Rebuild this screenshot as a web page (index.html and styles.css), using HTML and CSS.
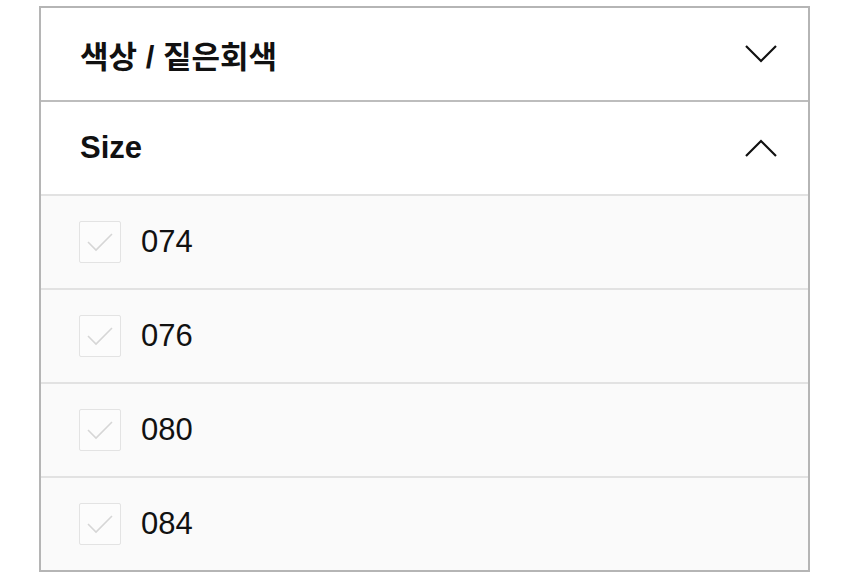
FILE: index.html
```html
<!DOCTYPE html>
<html lang="ko">
<head>
<meta charset="utf-8">
<title>Filter</title>
<link rel="stylesheet" href="styles.css">
</head>
<body>
<div class="panel">
  <div class="head">
    <span class="title">색상 / 짙은회색</span>
    <svg class="chev" width="32" height="18" viewBox="0 0 32 18"><polyline points="1,1 16,16 31,1" fill="none" stroke="#111" stroke-width="2.2"/></svg>
  </div>
  <div class="head">
    <span class="title">Size</span>
    <svg class="chev" width="32" height="18" viewBox="0 0 32 18"><polyline points="1,17 16,2 31,17" fill="none" stroke="#111" stroke-width="2.2"/></svg>
  </div>
  <div class="opt">
    <span class="box"><svg width="42" height="42" viewBox="0 0 42 42"><polyline points="9,21 17,29 33,13" fill="none" stroke="#d6d6d6" stroke-width="1.6"/></svg></span>
    <span class="label">074</span>
  </div>
  <div class="opt">
    <span class="box"><svg width="42" height="42" viewBox="0 0 42 42"><polyline points="9,21 17,29 33,13" fill="none" stroke="#d6d6d6" stroke-width="1.6"/></svg></span>
    <span class="label">076</span>
  </div>
  <div class="opt">
    <span class="box"><svg width="42" height="42" viewBox="0 0 42 42"><polyline points="9,21 17,29 33,13" fill="none" stroke="#d6d6d6" stroke-width="1.6"/></svg></span>
    <span class="label">080</span>
  </div>
  <div class="opt">
    <span class="box"><svg width="42" height="42" viewBox="0 0 42 42"><polyline points="9,21 17,29 33,13" fill="none" stroke="#d6d6d6" stroke-width="1.6"/></svg></span>
    <span class="label">084</span>
  </div>
</div>
</body>
</html>
```
FILE: styles.css
```css
html, body {
  margin: 0;
  padding: 0;
  background: #ffffff;
}
body {
  padding: 6px 0 0 39px;
  font-family: "Liberation Sans", "Noto Sans CJK KR", sans-serif;
}
.panel {
  width: 771px;
  box-sizing: border-box;
  border: 2px solid #b5b5b5;
  display: flex;
  flex-direction: column;
}
.head {
  height: 92px;
  display: flex;
  align-items: center;
  justify-content: space-between;
  padding: 0 31px 0 39px;
  background: #ffffff;
  border-bottom: 2px solid #bdbdbd;
}
.head:nth-child(2) {
  border-bottom-color: #e2e2e2;
}
.title {
  font-size: 31px;
  font-weight: bold;
  color: #111111;
}
.chev {
  display: block;
}
.opt {
  height: 92px;
  display: flex;
  align-items: center;
  gap: 20px;
  padding: 0 0 0 38px;
  background: #fafafa;
  border-bottom: 2px solid #e2e2e2;
}
.opt:last-child {
  border-bottom: none;
}
.box {
  width: 42px;
  height: 42px;
  box-sizing: border-box;
  border: 1.5px solid #e3e3e3;
  border-radius: 2px;
  background: #fcfcfc;
  position: relative;
  flex: none;
}
.box svg {
  position: absolute;
  left: -1.5px;
  top: -1.5px;
}
.label {
  font-size: 31px;
  color: #111111;
}
```
